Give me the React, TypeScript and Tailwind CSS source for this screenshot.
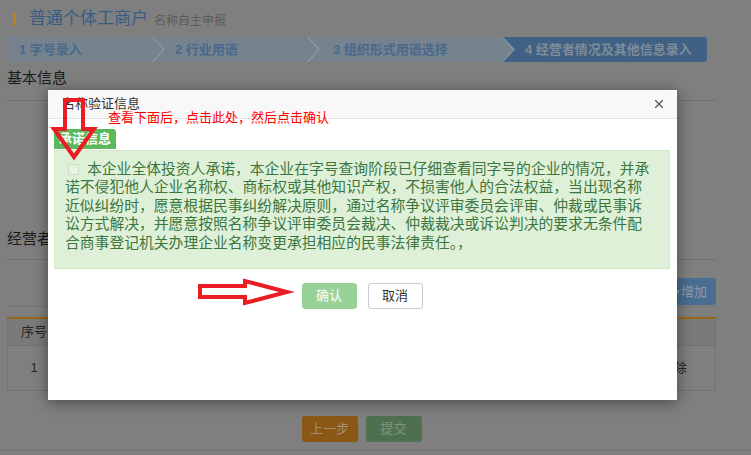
import React from "react"

const font = "[font-family:'Liberation_Sans','Noto_Sans_CJK_SC',sans-serif]"

function Chevron() {
  return (
    <svg className="absolute right-0 top-0 h-[25px] w-[13px]" viewBox="0 0 13 25">
      <polyline points="0.5,0 12,12.5 0.5,25" fill="none" stroke="#8996a3" strokeWidth="1.5" />
    </svg>
  )
}

const steps = [
  { label: "1 字号录入", cls: "w-[158px] pl-[12px]" },
  { label: "2 行业用语", cls: "w-[155px] pl-[10px]" },
  { label: "3 组织形式用语选择", cls: "w-[195px] pl-[13px]" },
]

const promise = [
  "本企业全体投资人承诺，本企业在字号查询阶段已仔细查看同字号的企业的情况，并承",
  "诺不侵犯他人企业名称权、商标权或其他知识产权，不损害他人的合法权益，当出现名称",
  "近似纠纷时，愿意根据民事纠纷解决原则，通过名称争议评审委员会评审、仲裁或民事诉",
  "讼方式解决，并愿意按照名称争议评审委员会裁决、仲裁裁决或诉讼判决的要求无条件配",
  "合商事登记机关办理企业名称变更承担相应的民事法律责任。，",
]

export default function App() {
  return (
    <div className={`relative h-[455px] w-[751px] overflow-hidden bg-[#7f7f7f] ${font}`}>
      {/* page behind the dialog, shown dimmed */}
      <div className="w-[716px] pl-[7px]">
        <div className="mt-[9px] flex h-[20px] items-center">
          <span className="ml-[6px] h-[13px] w-[3px] bg-[#b3840e]" />
          <span className="ml-[13px] text-[17px] leading-[20px] text-[#365c84]">普通个体工商户</span>
          <span className="ml-[6px] pt-[3px] text-[12px] leading-[20px] text-[#5c5c5c]">名称自主申报</span>
        </div>

        <div className="mt-[8px] flex h-[25px] w-[700px] rounded-[3px] bg-[#76838f] text-[13px] font-bold leading-[25px] text-[#48698b]">
          {steps.map((s) => (
            <div key={s.label} className={`relative shrink-0 ${s.cls}`}>
              {s.label}
              <Chevron />
            </div>
          ))}
          <div className="-ml-[12px] flex-1 rounded-r-[3px] bg-[#3e6184] pl-[22px] text-[#7f8b97] [clip-path:polygon(0_0,100%_0,100%_100%,0_100%,12px_50%)]">
            4 经营者情况及其他信息录入
          </div>
        </div>

        <div className="mt-[6px] h-[20px] text-[15px] leading-[20px] text-[#1b1b1b]">基本信息</div>
        <div className="mt-[12px] border-t border-[#727272]" />
        <div className="h-[128px]" />

        <div className="h-[20px] text-[15px] leading-[20px] text-[#1b1b1b]">经营者信息</div>
        <div className="mt-[10px] border-t border-[#727272]" />
        <div className="flex justify-end border-b border-[#747474] pb-[1px] pt-[18px]">
          <button className="flex h-[27px] items-center gap-[2px] rounded-[3px] bg-[#4a6d92] pl-[14px] pr-[9px] text-[13px] text-[#8d9aa6]">
            <svg width="9" height="9" viewBox="0 0 9 9">
              <path d="M4.5 0v9M0 4.5h9" stroke="#8d9aa6" strokeWidth="2.4" />
            </svg>
            增加
          </button>
        </div>

        <div className="mt-[10px] border border-t-2 border-[#727272] border-t-[#9a6716] text-[13px] text-[#262626]">
          <div className="grid h-[26px] grid-cols-[53px_1fr_116px] bg-[#7a7a7a]">
            <div className="flex items-center justify-center border-r border-[#727272]">序号</div>
            <div className="flex items-center justify-center border-r border-[#727272]">名称</div>
            <div className="flex items-center justify-center">操作</div>
          </div>
          <div className="grid h-[45px] grid-cols-[53px_1fr_116px] border-t border-[#727272]">
            <div className="flex items-center justify-center border-r border-[#727272]">1</div>
            <div className="flex items-center justify-center border-r border-[#727272]">张三</div>
            <div className="flex items-center justify-center gap-[8px]">
              <span>编辑</span>
              <span>删除</span>
            </div>
          </div>
        </div>

        <div className="mt-[25px] flex justify-center gap-[8px] text-[13px]">
          <button className="h-[26px] w-[56px] rounded-[3px] bg-[#8b5714] text-[#a48f78]">上一步</button>
          <button className="h-[26px] w-[56px] rounded-[3px] bg-[#4f7050] text-[#7d957d]">提交</button>
        </div>
      </div>
      <div className="mt-[8px] border-t border-[#727272]" />

      {/* dialog */}
      <div className="absolute left-[48px] top-[90px] h-[310px] w-[629px] bg-white shadow-[0_2px_14px_rgba(0,0,0,0.45)]">
        <div className="flex h-[29px] items-center justify-between border-b border-[#e5e5e5] bg-[#f8f8f8] px-[14px]">
          <span className="text-[13px] text-[#333]">名称验证信息</span>
          <svg width="8" height="8" viewBox="0 0 8 8">
            <path d="M0 0L8 8M8 0L0 8" stroke="#555" strokeWidth="1.3" />
          </svg>
        </div>

        <div className="pl-[6px] pr-[7px] pt-[7px]">
          <div className="inline-block h-[20px] rounded-t-[3px] bg-[#5cb85c] px-[5px] text-[13px] font-bold leading-[20px] text-white">
            承诺信息
          </div>
          <div className="h-[119px] border border-[#d6e9c6] bg-[#dff0d8] pl-[10px] pt-[9px] text-[14.8px] leading-[18.4px] text-[#3c763d]">
            {promise.map((line, i) => (
              <div key={i} className="whitespace-nowrap">
                {i === 0 && (
                  <span className="mb-[-1px] ml-[3px] mr-[8px] inline-block h-[11px] w-[11px] border border-[#cfe0c6] bg-[#e6f3e1]" />
                )}
                {line}
              </div>
            ))}
          </div>
          <div className="flex justify-center gap-[11px] pt-[14px] text-[13px]">
            <button className="h-[26px] w-[55px] rounded-[3px] border border-[#98d298] bg-[#98d298] text-white">确认</button>
            <button className="h-[26px] w-[55px] rounded-[3px] border border-[#ccc] bg-white text-[#333]">取消</button>
          </div>
        </div>

        {/* hand-drawn hints */}
        <div className="absolute left-[60px] top-[20px] text-[13px] leading-[16px] text-[#ff0000]">
          查看下面后，点击此处，然后点击确认
        </div>
        <svg className="absolute left-0 top-0" width="60" height="80" viewBox="0 0 60 80">
          <polygon
            points="17,10 35,10 35,39 46,39 26,67 6,39 17,39"
            fill="none"
            stroke="#ec1c24"
            strokeWidth="4"
          />
        </svg>
        <svg className="absolute left-[140px] top-[180px]" width="110" height="40" viewBox="0 0 110 40">
          <polygon
            points="12,16 57,16 57,11 99,22 57,33 57,27 12,27"
            fill="none"
            stroke="#ec1c24"
            strokeWidth="4"
          />
        </svg>
      </div>
    </div>
  )
}
